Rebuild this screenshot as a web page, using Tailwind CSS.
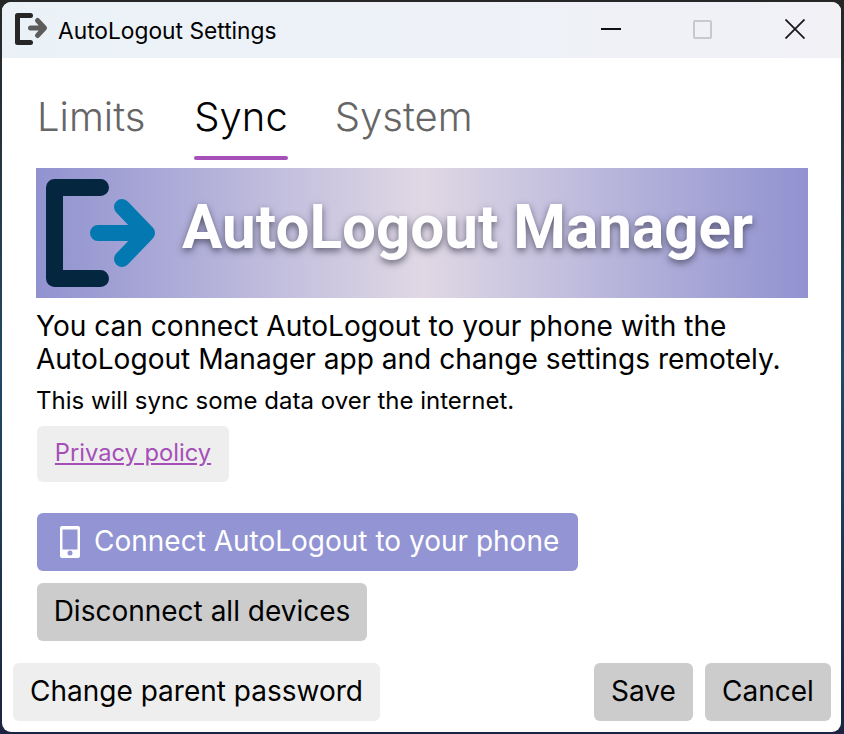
<!DOCTYPE html>
<html lang="en">
<head>
  <meta charset="utf-8">
  <title>AutoLogout Settings</title>
  <script src="https://cdn.jsdelivr.net/npm/@tailwindcss/browser@4"></script>
</head>
<body class="h-[734px] w-[844px] overflow-hidden bg-gradient-to-b from-[#262626] via-[#1f4a66] to-[#1c2340] pt-[2px] pl-[2px] pr-[3px] pb-[2px] font-['Inter',sans-serif]">
  <div class="flex h-full flex-col overflow-hidden rounded-[9px] bg-white">

    <!-- title bar -->
    <div class="flex h-[56px] shrink-0 items-center bg-gradient-to-r from-[#eaf2f8] to-[#f1f1f6]">
      <svg class="mb-[2px] ml-[13px] h-[32px] w-[34px]" viewBox="0 0 34 32" fill="none">
        <path d="M15.5 2.5 H2.5 V29.5 H15.5" stroke="#262626" stroke-width="5" stroke-linecap="round" stroke-linejoin="round"/>
        <path d="M15.5 15 H29 M22.5 7.5 L29.5 15 L22.5 22.5" stroke="#5c5c5c" stroke-width="5" stroke-linecap="round" stroke-linejoin="round"/>
      </svg>
      <span class="ml-[9px] mt-[2px] text-[22.75px] text-black">AutoLogout Settings</span>
      <div class="mb-[2px] ml-auto flex items-center">
        <svg class="mr-[72px] h-[2px] w-[20px]" viewBox="0 0 20 2"><rect width="20" height="2" fill="#111"/></svg>
        <div class="mr-[73px] h-[19px] w-[19px] rounded-[2px] border-2 border-[#c9c9c9]"></div>
        <svg class="mr-[36px] h-[20px] w-[20px]" viewBox="0 0 20 20" fill="none"><path d="M0.5 0.5 L19.5 19.5 M19.5 0.5 L0.5 19.5" stroke="#1a1a1a" stroke-width="1.8"/></svg>
      </div>
    </div>

    <!-- tabs -->
    <div class="flex h-[110px] shrink-0 gap-[47px] pl-[35px] pt-[36px] text-[40px] font-light leading-[46px]">
      <div class="text-[#666666]">Limits</div>
      <div class="relative ml-[2px] text-black">Sync
        <div class="absolute left-0 right-0 top-[62px] h-[4px] rounded-full bg-[#a64fb8]"></div>
      </div>
      <div class="text-[#666666]">System</div>
    </div>

    <!-- content -->
    <div class="flex flex-1 flex-col pl-[34px] pr-[33px]">
      <div class="flex h-[130px] shrink-0 items-center bg-gradient-to-r from-[#9192d0] via-[#e0d8e4] to-[#9192d0]">
        <svg class="ml-[8px] h-[110px] w-[112px]" viewBox="0 0 112 110" fill="none">
          <path d="M56.5 9.5 H10.5 V100.5 H56.5" stroke="#04263f" stroke-width="17" stroke-linecap="round" stroke-linejoin="round"/>
          <path d="M54 55 H103 M78 29 L103 55 L78 81" stroke="#0478b0" stroke-width="16" stroke-linecap="round" stroke-linejoin="round"/>
        </svg>
        <span class="mb-[10px] ml-[26px] font-['Roboto',sans-serif] text-[60.2px] font-bold leading-none text-white [text-shadow:0_3px_7px_rgba(50,50,70,0.7)]">AutoLogout Manager</span>
      </div>

      <p class="mt-[12px] text-[28.08px] leading-[33px] text-black">You can connect AutoLogout to your phone with the<br>AutoLogout Manager app and change settings remotely.</p>
      <p class="mt-[11px] text-[24px] leading-[27px] text-black">This will sync some data over the internet.</p>

      <a class="ml-[1px] mt-[12px] flex h-[56px] w-[192px] items-center justify-center rounded-[6px] bg-[#eeeeee] pb-[2px] text-[23.7px] text-[#a64fb8] underline">Privacy policy</a>

      <button class="ml-[1px] mt-[31px] flex h-[58px] w-[541px] items-center rounded-[6px] bg-[#9294d3] pl-[23px] text-[28px] text-white">
        <svg class="mr-[14px] h-[32px] w-[20px]" viewBox="0 0 20 32"><path fill-rule="evenodd" d="M2 0 H18 A2 2 0 0 1 20 2 V30 A2 2 0 0 1 18 32 H2 A2 2 0 0 1 0 30 V2 A2 2 0 0 1 2 0 Z M2.5 3.5 V23.5 H17.5 V3.5 Z M10 24.5 A2.5 2.5 0 1 0 10 29.5 A2.5 2.5 0 1 0 10 24.5 Z" fill="#fff"/></svg>
        <span class="pb-[2px]">Connect AutoLogout to your phone</span>
      </button>
      <button class="ml-[1px] mt-[12px] flex h-[58px] w-[330px] items-center justify-center rounded-[6px] bg-[#cccccc] pb-[2px] text-[28px] text-black">Disconnect all devices</button>
    </div>

    <!-- footer -->
    <div class="mb-[11px] flex items-center gap-[12px] pl-[11px] pr-[10px] text-[28px] text-black">
      <button class="mr-auto h-[58px] w-[367px] rounded-[6px] bg-[#eeeeee] pb-[2px]">Change parent password</button>
      <button class="h-[58px] w-[99px] rounded-[6px] bg-[#cccccc] pb-[2px]">Save</button>
      <button class="h-[58px] w-[126px] rounded-[6px] bg-[#cccccc] pb-[2px]">Cancel</button>
    </div>
  </div>
</body>
</html>
